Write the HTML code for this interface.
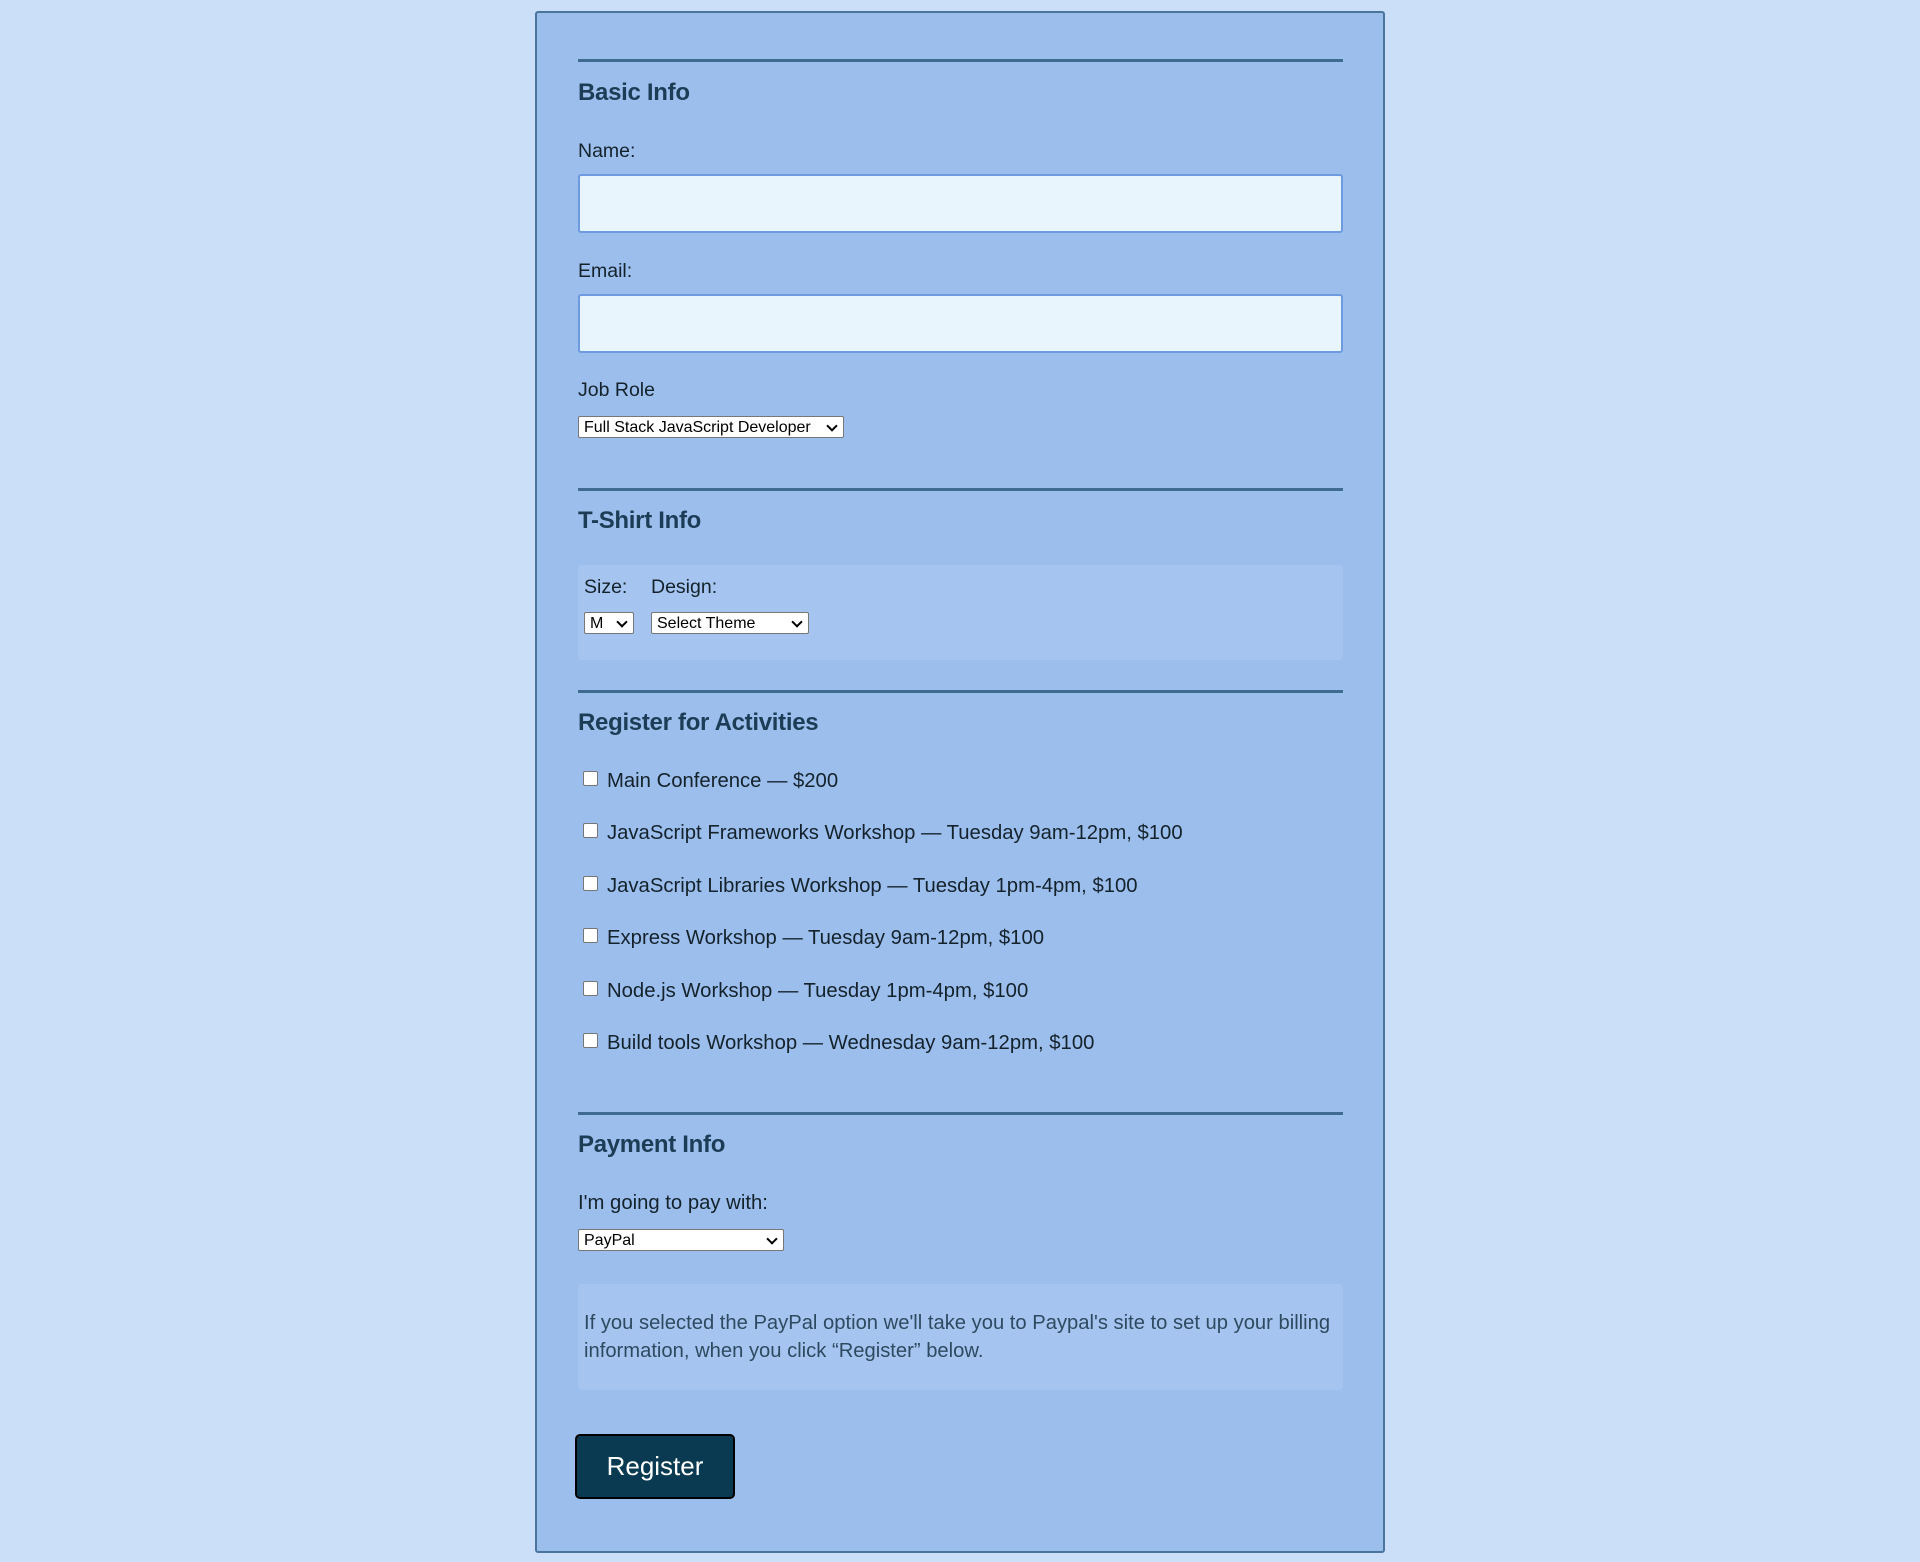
<!DOCTYPE html>
<html><head><meta charset="utf-8"><style>
*{box-sizing:border-box;margin:0;padding:0}
body{width:1920px;height:1562px;background:#cbdff9;font-family:"Liberation Sans",sans-serif;color:#1a2a33;position:relative;overflow:hidden}
.panel{position:absolute;left:535px;top:11px;width:850px;height:1542px;background:#9cbeed;border:2px solid #4a769c;border-radius:3px}
hr{position:absolute;left:578px;width:765px;height:3px;background:#3f6b90;border:0}
h2{position:absolute;left:578px;font-size:24px;font-weight:bold;color:#1c3d55;line-height:28px;letter-spacing:-0.3px}
.l{position:absolute;font-size:19.5px;line-height:24px;color:#14222b}
.act{font-size:20.3px}
.in{position:absolute;left:578px;width:765px;height:59px;background:#e8f5fc;border:2px solid #6d9ae0;border-radius:3px}
.sel{position:absolute;height:22px;background:#fff;border:1px solid #777;border-radius:2px;font-size:16px;line-height:22px;padding-left:5px;color:#000}
.sel:after{content:"";position:absolute;right:7px;top:5px;width:6px;height:6px;border-right:2px solid #000;border-bottom:2px solid #000;transform:rotate(45deg)}
.box{position:absolute;left:578px;width:765px;background:#a5c5f0;border-radius:4px}
.cb{position:absolute;left:583px;width:15px;height:15px;background:#fff;border:1px solid #767676;border-radius:2px}
.btn{position:absolute;left:575px;top:1434px;width:160px;height:65px;background:#093a52;border:2px solid #000;border-radius:5px;color:#fff;font-size:26px;text-align:center;line-height:61px}
</style></head><body>
<div class="panel"></div>
<hr style="top:59px">
<h2 style="top:79px">Basic Info</h2>
<div class="l" style="left:578px;top:139px">Name:</div>
<div class="in" style="top:174px"></div>
<div class="l" style="left:578px;top:259px">Email:</div>
<div class="in" style="top:294px"></div>
<div class="l" style="left:578px;top:378px">Job Role</div>
<div class="sel" style="left:578px;top:416px;width:266px">Full Stack JavaScript Developer</div>
<hr style="top:488px">
<h2 style="top:507px">T-Shirt Info</h2>
<div class="box" style="top:565px;height:95px"></div>
<div class="l" style="left:584px;top:575px">Size:</div>
<div class="l" style="left:651px;top:575px">Design:</div>
<div class="sel" style="left:584px;top:612px;width:50px">M</div>
<div class="sel" style="left:651px;top:612px;width:158px">Select Theme</div>
<hr style="top:690px">
<h2 style="top:709px">Register for Activities</h2>
<div class="cb" style="top:771px"></div><div class="l act" style="left:607px;top:769px">Main Conference — $200</div>
<div class="cb" style="top:823px"></div><div class="l act" style="left:607px;top:821px">JavaScript Frameworks Workshop — Tuesday 9am-12pm, $100</div>
<div class="cb" style="top:876px"></div><div class="l act" style="left:607px;top:874px">JavaScript Libraries Workshop — Tuesday 1pm-4pm, $100</div>
<div class="cb" style="top:928px"></div><div class="l act" style="left:607px;top:926px">Express Workshop — Tuesday 9am-12pm, $100</div>
<div class="cb" style="top:981px"></div><div class="l act" style="left:607px;top:979px">Node.js Workshop — Tuesday 1pm-4pm, $100</div>
<div class="cb" style="top:1033px"></div><div class="l act" style="left:607px;top:1031px">Build tools Workshop — Wednesday 9am-12pm, $100</div>
<hr style="top:1112px">
<h2 style="top:1131px">Payment Info</h2>
<div class="l" style="left:578px;top:1191px;font-size:20.3px">I'm going to pay with:</div>
<div class="sel" style="left:578px;top:1229px;width:206px">PayPal</div>
<div class="box" style="top:1284px;height:106px"></div>
<div class="l" style="left:584px;top:1309px;width:760px;line-height:28px;color:#2e4a60;font-size:20.2px">If you selected the PayPal option we'll take you to Paypal's site to set up your billing information, when you click “Register” below.</div>
<div class="btn">Register</div>
</body></html>
